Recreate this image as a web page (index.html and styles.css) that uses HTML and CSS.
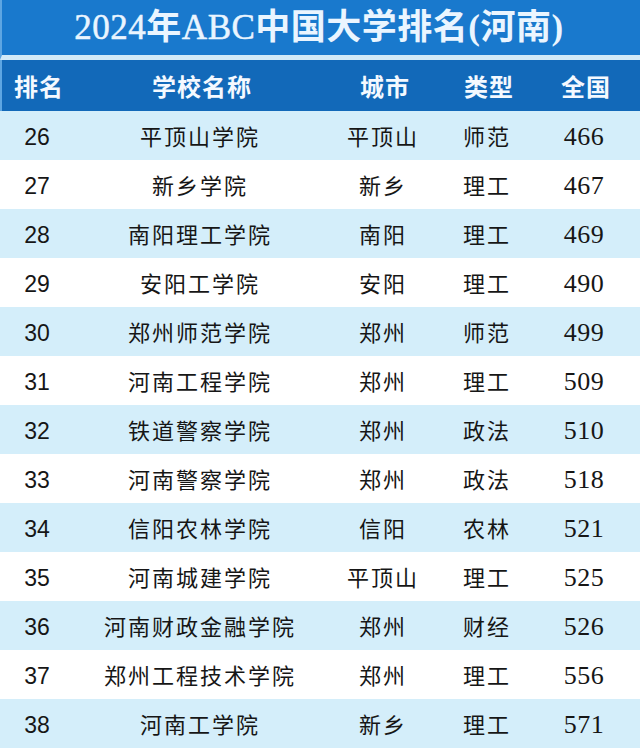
FILE: index.html
```html
<!DOCTYPE html>
<html lang="zh">
<head>
<meta charset="utf-8">
<title>2024年ABC中国大学排名(河南)</title>
<link rel="stylesheet" href="styles.css">
</head>
<body>
<div class="page">
  <div class="title"><span class="lat">2024</span>年<span class="lat">ABC</span>中国大学排名(河南)</div>
  <div class="row head">
    <div class="c">排名</div><div class="c">学校名称</div><div class="c">城市</div><div class="c">类型</div><div class="c">全国</div>
  </div>
  <div class="row alt"><div class="c rk">26</div><div class="c">平顶山学院</div><div class="c">平顶山</div><div class="c">师范</div><div class="c nat">466</div></div>
  <div class="row"><div class="c rk">27</div><div class="c">新乡学院</div><div class="c">新乡</div><div class="c">理工</div><div class="c nat">467</div></div>
  <div class="row alt"><div class="c rk">28</div><div class="c">南阳理工学院</div><div class="c">南阳</div><div class="c">理工</div><div class="c nat">469</div></div>
  <div class="row"><div class="c rk">29</div><div class="c">安阳工学院</div><div class="c">安阳</div><div class="c">理工</div><div class="c nat">490</div></div>
  <div class="row alt"><div class="c rk">30</div><div class="c">郑州师范学院</div><div class="c">郑州</div><div class="c">师范</div><div class="c nat">499</div></div>
  <div class="row"><div class="c rk">31</div><div class="c">河南工程学院</div><div class="c">郑州</div><div class="c">理工</div><div class="c nat">509</div></div>
  <div class="row alt"><div class="c rk">32</div><div class="c">铁道警察学院</div><div class="c">郑州</div><div class="c">政法</div><div class="c nat">510</div></div>
  <div class="row"><div class="c rk">33</div><div class="c">河南警察学院</div><div class="c">郑州</div><div class="c">政法</div><div class="c nat">518</div></div>
  <div class="row alt"><div class="c rk">34</div><div class="c">信阳农林学院</div><div class="c">信阳</div><div class="c">农林</div><div class="c nat">521</div></div>
  <div class="row"><div class="c rk">35</div><div class="c">河南城建学院</div><div class="c">平顶山</div><div class="c">理工</div><div class="c nat">525</div></div>
  <div class="row alt"><div class="c rk">36</div><div class="c">河南财政金融学院</div><div class="c">郑州</div><div class="c">财经</div><div class="c nat">526</div></div>
  <div class="row"><div class="c rk">37</div><div class="c">郑州工程技术学院</div><div class="c">郑州</div><div class="c">理工</div><div class="c nat">556</div></div>
  <div class="row alt"><div class="c rk">38</div><div class="c">河南工学院</div><div class="c">新乡</div><div class="c">理工</div><div class="c nat">571</div></div>
</div>
</body>
</html>
```
FILE: styles.css
```css
html, body {
  margin: 0;
  padding: 0;
  background: #ffffff;
}
.page {
  width: 640px;
  height: 748px;
  overflow: hidden;
  font-family: "Noto Sans CJK SC", sans-serif;
  color: #161616;
}
.title {
  height: 55px;
  background: #1979cd;
  color: #eaf5ff;
  font-family: "Liberation Serif", "Noto Sans CJK SC", serif;
  font-weight: bold;
  font-size: 35px;
  line-height: 55px;
  text-align: center;
  letter-spacing: 0.5px;
  border-bottom: 5px solid #d2eaf8;
  border-left: 2px solid #5ea6e2;
  padding-right: 4px;
}
.title .lat {
  font-weight: normal;
  -webkit-text-stroke: 0.5px #eaf5ff;
}
.row {
  display: grid;
  grid-template-columns: 74px 252px 114px 94px 100px;
  height: 49px;
  align-items: baseline;
  font-size: 22px;
  letter-spacing: 2px;
  overflow: hidden;
}
.c {
  text-align: center;
  white-space: nowrap;
  line-height: 49px;
}
.row.head {
  height: 51px;
  background: #1269b9;
  color: #f4f9ff;
  font-weight: bold;
  font-size: 24px;
  letter-spacing: 1px;
  border-left: 2px solid #5ea6e2;
}
.row.head .c {
  line-height: 51px;
}
.row.alt {
  background: #d4eefa;
}
.rk {
  font-family: "Liberation Sans", sans-serif;
  font-size: 23px;
  letter-spacing: 0;
}
.nat {
  font-family: "Liberation Serif", serif;
  font-size: 26px;
  letter-spacing: 0.5px;
}
```
